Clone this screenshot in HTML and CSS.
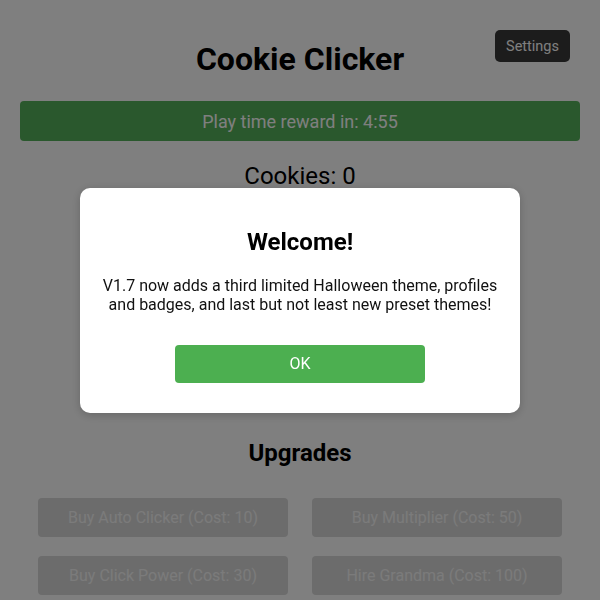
FILE: index.html
```html
<!DOCTYPE html>
<html lang="en">
<head>
<meta charset="utf-8">
<title>Cookie Clicker</title>
<link rel="stylesheet" href="styles.css">
</head>
<body>
<div class="page">
  <button class="settings">Settings</button>
  <h1 class="title">Cookie Clicker</h1>
  <div class="reward">Play time reward in: 4:55</div>
  <div class="count">Cookies: 0</div>
  <div class="cookie-area"><div class="cookie"></div></div>
  <h2 class="section">Upgrades</h2>
  <div class="upgrades">
    <button class="upgrade" disabled>Buy Auto Clicker (Cost: 10)</button>
    <button class="upgrade" disabled>Buy Multiplier (Cost: 50)</button>
    <button class="upgrade" disabled>Buy Click Power (Cost: 30)</button>
    <button class="upgrade" disabled>Hire Grandma (Cost: 100)</button>
  </div>
</div>
<div class="overlay">
  <div class="modal">
    <h2 class="modal-title">Welcome!</h2>
    <p class="modal-text">V1.7 now adds a third limited Halloween theme, profiles and badges, and last but not least new preset themes!</p>
    <button class="ok">OK</button>
  </div>
</div>
</body>
</html>
```
FILE: styles.css
```css
* { box-sizing: border-box; }
html, body { margin: 0; padding: 0; }
body {
  font-family: Roboto, "Liberation Sans", sans-serif;
  background: #ffffff;
  color: #000;
  width: 600px;
  height: 600px;
  overflow: hidden;
}
.page {
  position: relative;
  padding: 0 20px;
  display: flex;
  flex-direction: column;
  align-items: stretch;
}
.settings {
  position: absolute;
  top: 30px;
  right: 30px;
  width: 75px;
  height: 32px;
  background: #383838;
  color: #fff;
  border: none;
  border-radius: 5px;
  font-family: inherit;
  font-size: 14.5px;
  padding: 0;
}
.title {
  margin: 42px 0 24px;
  font-size: 32px;
  line-height: 35px;
  font-weight: 700;
  text-align: center;
}
.reward {
  height: 40px;
  background: #55b05a;
  color: #fff;
  border-radius: 4px;
  display: flex;
  align-items: center;
  justify-content: center;
  font-size: 18px;
}
.count {
  margin-top: 21px;
  font-size: 24px;
  line-height: 28px;
  text-align: center;
}
.cookie-area {
  height: 250px;
  display: flex;
  align-items: center;
  justify-content: center;
}
.cookie {
  width: 180px;
  height: 180px;
  border-radius: 50%;
  background: #c68642;
}
.section {
  margin: 0;
  font-size: 24px;
  line-height: 26px;
  font-weight: 700;
  text-align: center;
}
.upgrades {
  margin-top: 32px;
  display: grid;
  grid-template-columns: 250px 250px;
  gap: 19px 24px;
  justify-content: center;
}
.upgrade {
  height: 39px;
  background: #d9d9d9;
  color: #f6f6f6;
  border: none;
  border-radius: 4px;
  font-family: inherit;
  font-size: 16px;
  padding: 0;
}
.overlay {
  position: fixed;
  inset: 0;
  background: rgba(0, 0, 0, 0.5);
  display: flex;
  align-items: center;
  justify-content: center;
}
.modal {
  width: 440px;
  background: #fff;
  border-radius: 10px;
  padding: 41px 20px 30px;
  display: flex;
  flex-direction: column;
  align-items: center;
  text-align: center;
  box-shadow: 0 2px 10px rgba(0, 0, 0, 0.2);
}
.modal-title {
  margin: 0 0 21px;
  font-size: 24px;
  line-height: 26px;
  font-weight: 700;
}
.modal-text {
  margin: 0 0 30px;
  font-size: 16px;
  line-height: 19.5px;
  color: #111;
}
.ok {
  width: 250px;
  height: 38px;
  background: #4caf50;
  color: #fff;
  border: none;
  border-radius: 4px;
  font-family: inherit;
  font-size: 16px;
  padding: 0;
}
```
